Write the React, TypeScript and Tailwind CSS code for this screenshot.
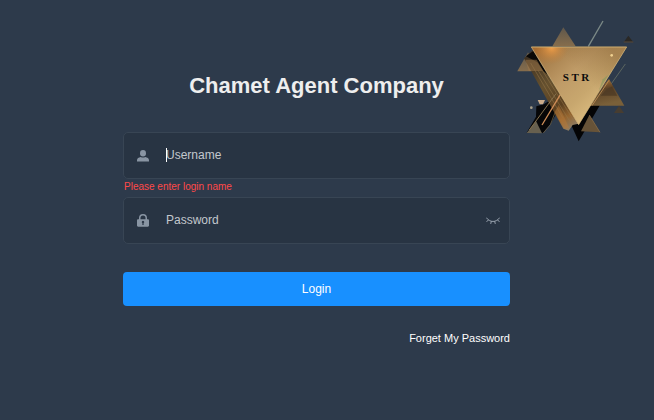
import { useState } from "react";

const UserIcon = () => (
    <svg viewBox="0 0 12 12" className="h-3 w-3 fill-[#8995a3]" aria-hidden="true">
        <ellipse cx="6" cy="3.2" rx="3" ry="3.2" />
        <path d="M0 11.6V10.2C0 8.3 1.6 7.6 3.8 7c1.300.7 3.100.7 4.400 0C10.400 7.600 12 8.300 12 10.200v1.400z" />
    </svg>
);

const LockIcon = () => (
    <svg viewBox="0 0 12 13" className="h-[13px] w-3 fill-[#8995a3]" aria-hidden="true">
        <path
            fillRule="evenodd"
            d="M2 5.200V4a4 4 0 0 1 8 0v1.200h.8c.7 0 1.200.5 1.200 1.200v5.100c0 .7-.5 1.200-1.200 1.200H1.200C.5 12.700 0 12.200 0 11.500V6.400c0-.7.5-1.200 1.200-1.200zM3.500 5.200h5V4a2.500 2.500 0 0 0-5 0zM5.400 9.100v1.900h1.200V9.100a1.200 1.200 0 1 0-1.200 0z"
        />
    </svg>
);

const ClosedEyeIcon = () => (
    <svg viewBox="0 0 14 8" className="h-2 w-[14px] fill-none stroke-[#98a2ae]" strokeLinecap="round" aria-hidden="true">
        <path d="M.6 1C3.500 5.700 10.500 5.700 13.400 1M2.300 3 .8 4.600M5.300 4.500l-.5 2M8.700 4.500l.5 2M11.700 3l1.500 1.600" />
    </svg>
);

const Logo = () => (
    <svg viewBox="0 0 390 390" className="h-[130px] w-[130px]" role="img" aria-label="STR">
        <defs>
            <linearGradient id="face" x1="64" y1="96" x2="255" y2="300" gradientUnits="userSpaceOnUse">
                <stop offset="0" stopColor="#a8692c" />
                <stop offset="0.25" stopColor="#aa8350" />
                <stop offset="0.5" stopColor="#bf9b67" />
                <stop offset="0.75" stopColor="#c8a76e" />
                <stop offset="1" stopColor="#dcbc80" />
            </linearGradient>
            <radialGradient id="glow" cx="125" cy="98" r="50" gradientUnits="userSpaceOnUse">
                <stop offset="0" stopColor="#f0a04a" />
                <stop offset="1" stopColor="#c07a35" stopOpacity="0" />
            </radialGradient>
            <linearGradient id="sheen" x1="300" y1="96" x2="215" y2="180" gradientUnits="userSpaceOnUse">
                <stop offset="0" stopColor="#8f6b3c" stopOpacity="0.6" />
                <stop offset="1" stopColor="#8f6b3c" stopOpacity="0" />
            </linearGradient>
            <linearGradient id="dusk" x1="0" y1="0" x2="0" y2="1">
                <stop offset="0" stopColor="#5f574b" />
                <stop offset="1" stopColor="#866d4c" />
            </linearGradient>
            <linearGradient id="band" x1="50" y1="130" x2="180" y2="340" gradientUnits="userSpaceOnUse">
                <stop offset="0" stopColor="#3d3021" />
                <stop offset="0.4" stopColor="#66512f" />
                <stop offset="0.7" stopColor="#5b4020" />
                <stop offset="0.86" stopColor="#96652f" />
                <stop offset="1" stopColor="#8f7c60" />
            </linearGradient>
            <linearGradient id="ember" x1="0" y1="0" x2="0.3" y2="1">
                <stop offset="0" stopColor="#c8843c" />
                <stop offset="0.45" stopColor="#5c4226" />
                <stop offset="1" stopColor="#7a6039" />
            </linearGradient>
        </defs>

        <path d="M279 18 235 94" stroke="#7c8a87" strokeWidth="4" />
        <path d="M346 147 270 254" stroke="#5c6660" strokeWidth="3" />
        <path d="M160 37 127 94h70z" fill="url(#dusk)" />
        <path d="M355 62 341 82h29z" fill="#2a2825" />
        <path d="M341 81h29" stroke="#5a4d3e" strokeWidth="3" />

        <path d="M101 268 127 252 146 240 158 262 121 328 99 354 66 348 50 353 78 305 79 274z" fill="#060607" />
        <path d="M78 318 50 354 96 355z" fill="#67604f" />
        <path d="M147 262 121 329 100 354" fill="none" stroke="#7b6b4d" strokeWidth="2" />

        <path d="M54 112 22 169h68z" fill="url(#dusk)" />
        <path d="M170 300 206 379 275 262 268 222z" fill="#040405" />
        <path d="M42 130 68 106 206 326 188 330 176 347 160 341z" fill="url(#band)" />
        <path d="M48 124 70 108 112 178 100 168 82 142z" fill="#090807" />
        <path d="M46 134h34l20 34H56z" fill="#a27949" opacity="0.5" />
        <path d="M62 144 158 308M84 166 184 326M98 168 192 318" stroke="#97794b" strokeWidth="3" opacity="0.5" />
        <path d="M146 270 178 340 163 341 134 292z" fill="#b8793a" opacity="0.5" />

        <path d="M138 236 58 345" stroke="#86714e" strokeWidth="3" />
        <path d="M151 239 96 330" stroke="#d08e58" strokeWidth="4" />
        <path d="M83 255h22l-6 13H89z" fill="#c9ab8b" />
        <circle cx="64" cy="278" r="4" fill="#aaa18a" />

        <path d="M297 192 343 272H240L284 207z" fill="url(#ember)" />
        <path d="M290 222 306 215 322 242H272z" fill="#4a3824" opacity="0.7" />
        <path d="M246 272 297 196" stroke="#b08550" strokeWidth="3" />
        <path d="M327 272 312 294h30z" fill="#473d31" />
        <path d="M238 300 270 352 213 349z" fill="#675338" />
        <path d="M238 300 249 318 270 352" fill="none" stroke="#92744a" strokeWidth="2" />

        <path d="M64 96H350L206 329z" fill="url(#face)" />
        <path d="M64 96H350L206 329z" fill="url(#sheen)" />
        <path d="M64 96H350L206 329z" fill="url(#glow)" />
        <path d="M64 96H350" stroke="#d0ae71" strokeWidth="3" />
        <path d="M64 96 206 329 350 96" fill="none" stroke="#d6b77a" strokeWidth="2" />
        <path d="M297 178 266 228 278 193z" fill="#8f9a5f" opacity="0.7" />
        <circle cx="305" cy="121" r="4" fill="#f0d190" />
        <text
            x="198"
            y="197"
            textAnchor="middle"
            fontSize="33"
            className="fill-[#0b0b0c] font-['Liberation_Serif',serif] font-bold"
        >
            S T R
        </text>
    </svg>
);

const App = () => {
    const [username, setUsername] = useState("");
    const [password, setPassword] = useState("");
    const [visible, setVisible] = useState(false);

    return (
        <div className="relative min-h-screen bg-[#2d3a4b] pl-4 pr-[37px] pt-[70px] font-['Liberation_Sans',Arial,sans-serif] text-xs text-white">
            <div className="absolute right-[14px] top-[15px]">
                <Logo />
            </div>
            <form className="mx-auto w-full max-w-[387px]" noValidate onSubmit={(e) => e.preventDefault()}>
                <h1 className="mb-[30px] text-center text-[22px] font-bold leading-8 text-[#eeeeee]">
                    Chamet Agent Company
                </h1>

                <div className="flex h-[47px] items-center rounded-[5px] border border-[#384554] bg-[#283443] pl-[13px] pr-[9px]">
                    <label htmlFor="username" className="w-[29px]">
                        <UserIcon />
                    </label>
                    <div className="relative flex-1">
                        <input
                            id="username"
                            type="text"
                            aria-label="Username"
                            aria-invalid={!username}
                            aria-describedby="username-error"
                            placeholder="Username"
                            value={username}
                            onChange={(e) => setUsername(e.target.value)}
                            className="peer block h-11 w-full bg-transparent pb-0.5 text-white outline-none placeholder:text-[#c3c8cd]"
                        />
                        <span className="absolute left-0 top-[14px] h-[14px] w-px bg-white peer-focus:hidden" />
                    </div>
                </div>
                <p id="username-error" className="h-[18px] pl-px text-[10px] leading-4 text-[#ff4949]">
                    {!username && "Please enter login name"}
                </p>

                <div className="flex h-[47px] items-center rounded-[5px] border border-[#384554] bg-[#283443] pl-[13px] pr-[9px]">
                    <label htmlFor="password" className="w-[29px]">
                        <LockIcon />
                    </label>
                    <input
                        id="password"
                        type={visible ? "text" : "password"}
                        aria-label="Password"
                        placeholder="Password"
                        value={password}
                        onChange={(e) => setPassword(e.target.value)}
                        className="block h-11 flex-1 bg-transparent pb-0.5 text-white outline-none placeholder:text-[#c3c8cd]"
                    />
                    <button type="button" aria-label="Show password" onClick={() => setVisible(!visible)}>
                        <ClosedEyeIcon />
                    </button>
                </div>

                <button type="submit" className="mt-7 block h-[34px] w-full rounded bg-[#1890ff] text-white">
                    Login
                </button>
                <div className="mt-6 text-right text-[11px] leading-4">
                    <a href="#forget">Forget My Password</a>
                </div>
            </form>
        </div>
    );
};

export default App;
